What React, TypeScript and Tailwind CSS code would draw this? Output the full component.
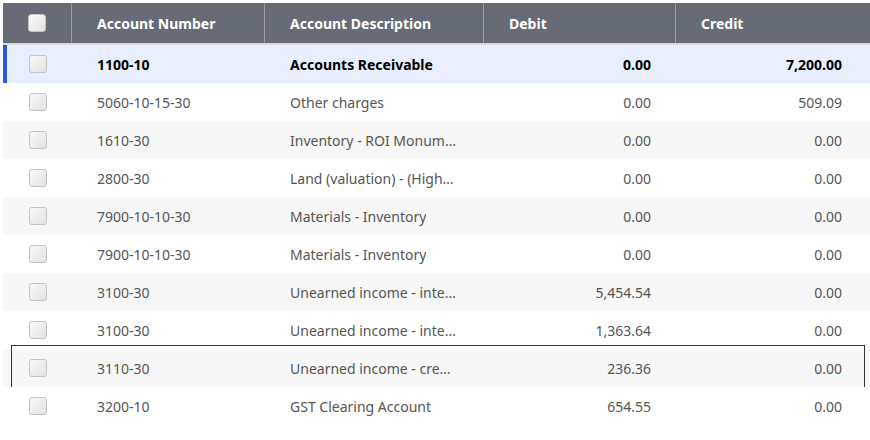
const rows = [
  ["1100-10", "Accounts Receivable", "0.00", "7,200.00"],
  ["5060-10-15-30", "Other charges", "0.00", "509.09"],
  ["1610-30", "Inventory - ROI Monuments", "0.00", "0.00"],
  ["2800-30", "Land (valuation) - (Highway)", "0.00", "0.00"],
  ["7900-10-10-30", "Materials - Inventory", "0.00", "0.00"],
  ["7900-10-10-30", "Materials - Inventory", "0.00", "0.00"],
  ["3100-30", "Unearned income - interest", "5,454.54", "0.00"],
  ["3100-30", "Unearned income - interest", "1,363.64", "0.00"],
  ["3110-30", "Unearned income - credit card", "236.36", "0.00"],
  ["3200-10", "GST Clearing Account", "654.55", "0.00"],
];

const cols = "grid grid-cols-[69px_193px_219px_192px_191px]";

function Box() {
  return (
    <div className="w-[18px] h-[18px] rounded-[3px] border border-[#c4c4c4] bg-gradient-to-br from-[#fafafa] to-[#e2e2e2]" />
  );
}

export default function App() {
  return (
    <div className="w-[870px] h-[440px] bg-white pt-[3px] pl-[3px] font-['Liberation_Sans'] text-[14px]">
      <div className={`${cols} h-[42px] bg-[#676b76] text-white font-bold border-b-2 border-[#d9dbe0]`}>
        <div className="flex items-center justify-center border-r border-[#9a9da5]"><Box /></div>
        <div className="flex items-center pl-[25px] border-r border-[#9a9da5]">Account Number</div>
        <div className="flex items-center pl-[25px] border-r border-[#9a9da5]">Account Description</div>
        <div className="flex items-center pl-[25px] border-r border-[#9a9da5]">Debit</div>
        <div className="flex items-center pl-[25px]">Credit</div>
      </div>
      {rows.map((r, i) => {
        const sel = i === 0;
        const focus = i === 8;
        const bg = sel ? "bg-[#e8eefb]" : i % 2 === 0 ? "bg-[#f7f7f7]" : "bg-white";
        return (
          <div key={i} className={`relative ${cols} h-[38px] ${bg} ${sel ? "text-black font-bold" : "text-[#555]"}`}>
            {sel && <div className="absolute left-0 top-0 bottom-0 w-[4px] bg-[#2a5bd7]" />}
            {focus && <div className="absolute left-[8px] right-[5px] top-[-4px] bottom-[-6px] border border-[#333]" />}
            <div className="flex items-center justify-center"><Box /></div>
            <div className="flex items-center pl-[25px]">{r[0]}</div>
            <div className="flex items-center pl-[25px] min-w-0"><span className="truncate max-w-[168px]">{r[1]}</span></div>
            <div className="flex items-center justify-end pr-[25px]">{r[2]}</div>
            <div className="flex items-center justify-end pr-[25px]">{r[3]}</div>
          </div>
        );
      })}
    </div>
  );
}
